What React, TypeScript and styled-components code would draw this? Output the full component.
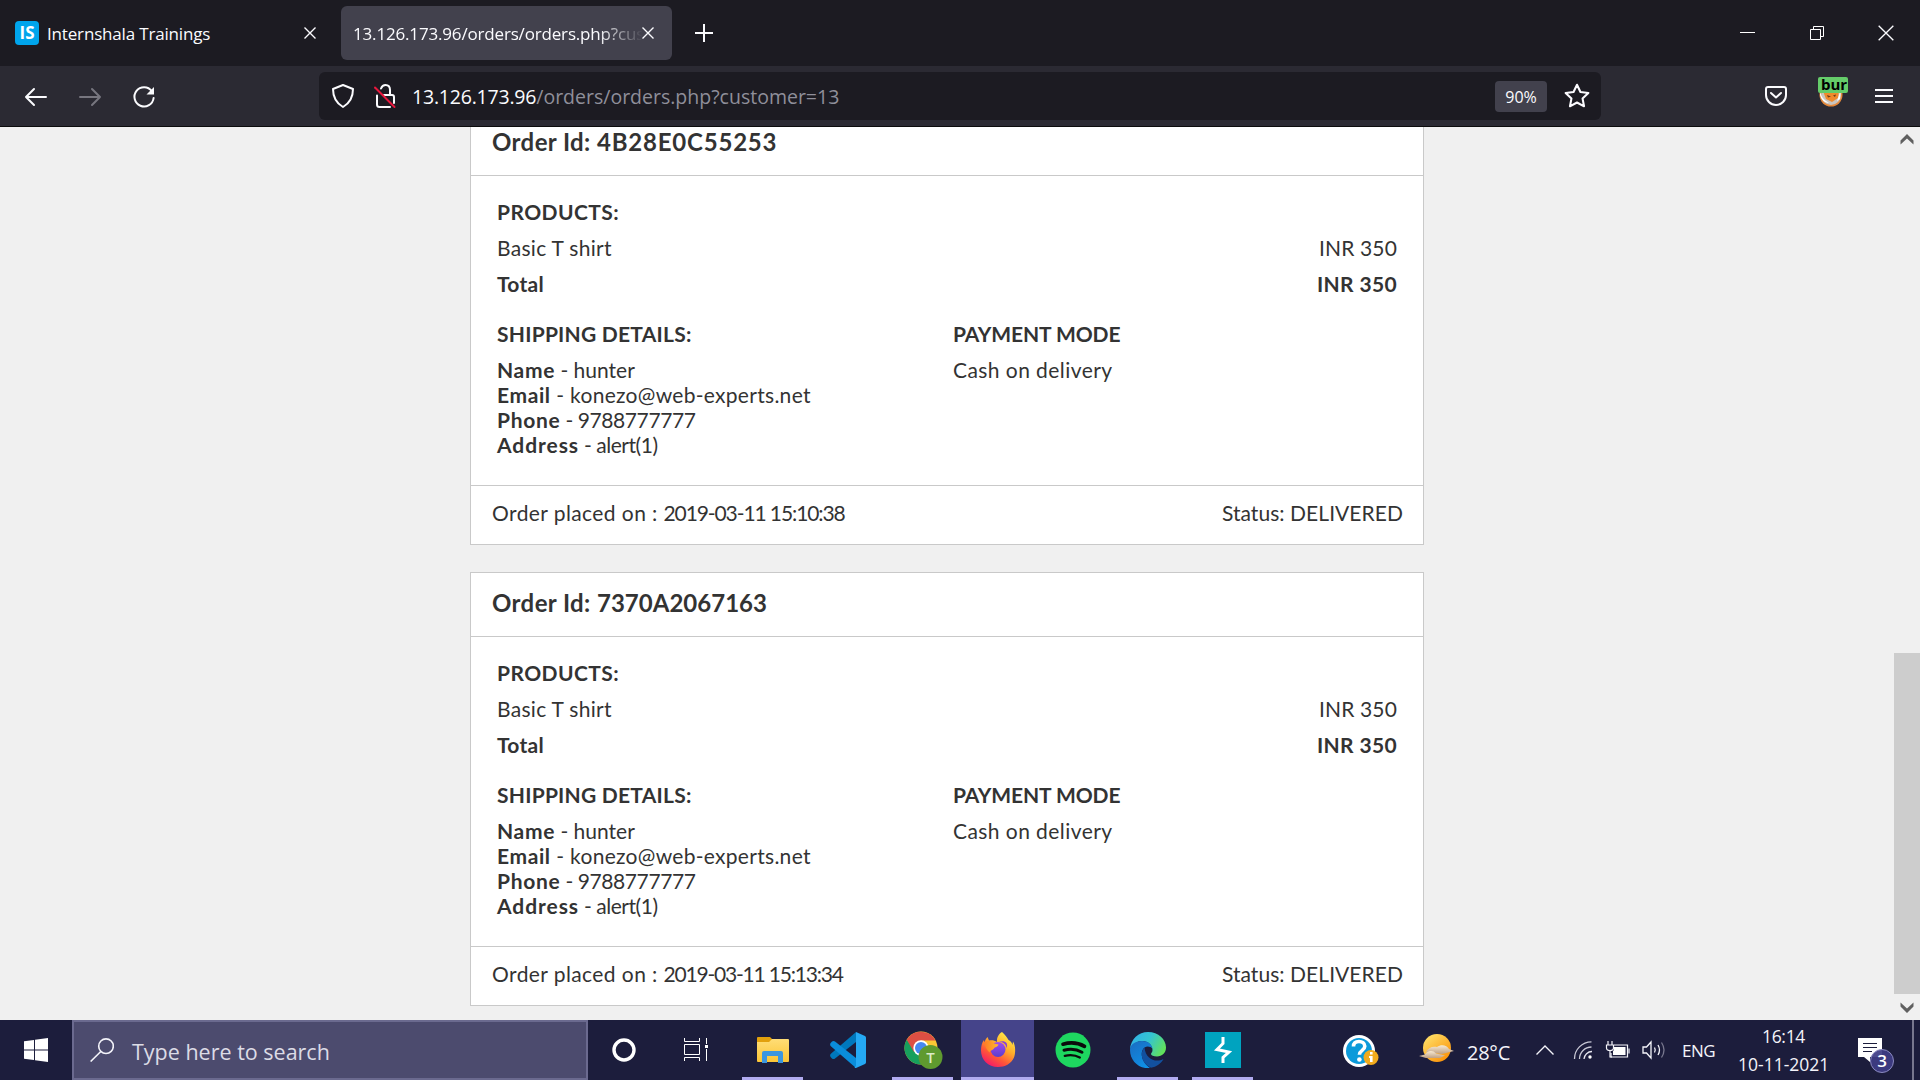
import React from "react";
import styled, { createGlobalStyle, css } from "styled-components";

const Global = createGlobalStyle`
  *, *::before, *::after { box-sizing: border-box; }
  html, body { margin: 0; padding: 0; background: #f0f0f0; }
`;

const chromeFont = css`font-family: "Open Sans", "Noto Sans", sans-serif;`;

const Screen = styled.div`
  width: 1920px;
  height: 1080px;
  display: flex;
  flex-direction: column;
  overflow: hidden;
  svg { display: block; flex: none; }
`;

/* ---------- tab strip ---------- */
const TabStrip = styled.header`
  ${chromeFont}
  height: 66px;
  flex: none;
  display: flex;
  align-items: center;
  background: #1c1b22;
  color: #fbfbfe;
`;
const Tab = styled.div<{ $active?: boolean }>`
  width: ${(p) => (p.$active ? 331 : 341)}px;
  height: 54px;
  display: flex;
  align-items: center;
  padding: ${(p) => (p.$active ? "0 18px 0 12px" : "0 25px 0 15px")};
  border-radius: 6px;
  background: ${(p) => (p.$active ? "#42414d" : "transparent")};
`;
const Favicon = styled.div`
  width: 24px;
  height: 24px;
  margin-right: 8px;
  border-radius: 4px;
  background: #00a5ec;
  color: #fff;
  font-weight: 700;
  font-size: 17px;
  line-height: 24px;
  text-align: center;
`;
const TabTitle = styled.span<{ $fade?: boolean }>`
  flex: 1;
  min-width: 0;
  padding-top: 1px;
  overflow: hidden;
  white-space: nowrap;
  font-size: 17px;
  line-height: 26px;
  letter-spacing: -0.17px;
  ${(p) => p.$fade && "mask-image: linear-gradient(to right, #000 245px, transparent 290px);"}
`;
const NewTab = styled.div`
  width: 64px;
  display: flex;
  justify-content: center;
`;
const WindowControls = styled.div`
  margin-left: auto;
  display: grid;
  grid-template-columns: repeat(3, 69px);
  justify-items: center;
  align-items: center;
`;

/* ---------- toolbar ---------- */
const Toolbar = styled.nav`
  ${chromeFont}
  height: 61px;
  flex: none;
  display: flex;
  align-items: center;
  padding: 0 27px 0 18px;
  background: #2b2a33;
  border-bottom: 1px solid #0c0c0d;
  color: #fbfbfe;
`;
const NavButtons = styled.div`
  display: grid;
  grid-template-columns: repeat(3, 36px);
  gap: 18px;
  justify-items: center;
  padding-top: 2px;
`;
const UrlBar = styled.div`
  width: 1282px;
  height: 48px;
  margin-left: 157px;
  display: flex;
  align-items: center;
  padding: 0 11px 0 12px;
  border-radius: 6px;
  background: #1c1b22;
`;
const Address = styled.div`
  flex: 1;
  margin-left: 15px;
  padding-top: 2px;
  font-size: 19.5px;
  line-height: 28px;
  color: #8f8f9a;
  white-space: nowrap;
`;
const Host = styled.span`
  color: #fbfbfe;
  letter-spacing: -0.2px;
`;
const IdentityIcons = styled.div`
  display: flex;
  gap: 18px;
`;
const Zoom = styled.div`
  width: 52px;
  height: 31px;
  margin-right: 17px;
  border-radius: 4px;
  background: #42414d;
  font-size: 16px;
  line-height: 32px;
  text-align: center;
`;
const Extensions = styled.div`
  margin-left: auto;
  display: flex;
  align-items: center;
`;
const Fox = styled.div`
  position: relative;
  width: 30px;
  height: 32px;
  margin: 0 27px 0 31px;
`;
const FoxBadge = styled.span`
  position: absolute;
  top: -3px;
  left: 0;
  width: 30px;
  height: 16px;
  padding-left: 3px;
  overflow: hidden;
  border-radius: 2px;
  background: #65cc6a;
  color: #000;
  font-weight: 700;
  font-size: 15px;
  line-height: 14px;
`;

/* ---------- page ---------- */
const Viewport = styled.main`
  flex: 1;
  min-height: 0;
  display: flex;
  background: #f0f0f0;
  overflow: hidden;
`;
const Orders = styled.div`
  flex: 1;
  display: flex;
  flex-direction: column;
  gap: 27px;
  margin-top: -16px;
  padding-left: 470px;
  font-family: Lato, "Open Sans", sans-serif;
  font-size: 21px;
  line-height: 25px;
  color: #333;
`;
const Card = styled.article`
  width: 954px;
  height: 434px;
  flex: none;
  display: flex;
  flex-direction: column;
  border: 1px solid #c9c9c9;
  background: #fff;
  white-space: nowrap;
`;
const CardHeader = styled.h3`
  height: 64px;
  margin: 0;
  padding: 15px 21px 0;
  border-bottom: 1px solid #c9c9c9;
  font-size: 24px;
  font-weight: 700;
  line-height: 30px;
`;
const CardBody = styled.div`
  flex: 1;
  padding: 23px 26px 0;
`;
const CardFooter = styled.div`
  height: 59px;
  display: flex;
  justify-content: space-between;
  padding: 14px 20px 0 21px;
  border-top: 1px solid #c9c9c9;
`;
const Heading = styled.h4`
  margin: 0 0 11px;
  font-size: 21px;
  font-weight: 700;
`;
const LineItem = styled.div<{ $total?: boolean }>`
  display: flex;
  justify-content: space-between;
  margin-bottom: ${(p) => (p.$total ? 25 : 11)}px;
  font-weight: ${(p) => (p.$total ? 700 : 400)};
`;
const Details = styled.div`
  display: grid;
  grid-template-columns: 456px 1fr;
`;
const Spaced = styled.span<{ $ls: number }>`
  letter-spacing: ${(p) => p.$ls}px;
  white-space: pre;
`;
const Label = styled(Spaced)`
  font-weight: 700;
`;
const Scrollbar = styled.aside`
  width: 26px;
  display: flex;
  flex-direction: column;
  align-items: center;
  padding: 6px 0;
`;
const Track = styled.div`
  flex: 1;
  width: 26px;
  padding: 508px 0 8px;
  display: flex;
`;
const Thumb = styled.div`
  flex: 1;
  background: #cdcdcd;
`;

/* ---------- taskbar ---------- */
const Taskbar = styled.footer`
  ${chromeFont}
  height: 60px;
  flex: none;
  display: flex;
  align-items: stretch;
  background: #1c1d3c;
  color: #f4f4fa;
`;
const SystemCell = styled.div`
  width: 72px;
  display: flex;
  align-items: center;
  justify-content: center;
`;
const Search = styled.div`
  width: 516px;
  display: flex;
  align-items: center;
  gap: 18px;
  padding-left: 16px;
  border: 2px solid #6b6a8f;
  background: #4c4b6e;
  color: #dcdce6;
  font-size: 21.5px;
  line-height: 30px;
`;
const SearchText = styled.span`
  padding-top: 3px;
`;
const Apps = styled.div`
  display: flex;
  gap: 2px;
  margin-left: 4px;
`;
const AppButton = styled.div<{ $state: "idle" | "open" | "focused" }>`
  width: 73px;
  display: flex;
  flex-direction: column;
  align-items: center;
  background: ${(p) => (p.$state === "focused" ? "#45448a" : "transparent")};
`;
const AppIcon = styled.div`
  height: 57px;
  display: flex;
  align-items: center;
  padding-top: 3px;
`;
const Indicator = styled.div<{ $state: "idle" | "open" | "focused" }>`
  width: ${(p) => (p.$state === "focused" ? 73 : 61)}px;
  height: 3px;
  background: ${(p) => (p.$state === "idle" ? "transparent" : "#b1abf0")};
`;
const Tray = styled.div`
  margin-left: auto;
  display: flex;
  align-items: center;
`;
const Temperature = styled.span`
  width: 44px;
  margin: 4px 25px 0 11px;
  font-size: 20px;
  letter-spacing: -0.26px;
  white-space: nowrap;
`;
const Language = styled.span`
  width: 34px;
  margin: 1px 22px 0 17px;
  font-size: 17px;
  letter-spacing: -0.5px;
`;
const Clock = styled.div`
  width: 91px;
  margin-right: 29px;
  font-size: 17.5px;
  line-height: 28px;
  text-align: center;
  white-space: nowrap;
`;
const Notifications = styled.div`
  position: relative;
  width: 36px;
  height: 36px;
  margin-right: 18px;
  padding-top: 6px;
`;
const Count = styled.span`
  position: absolute;
  top: 17px;
  left: 12px;
  width: 24px;
  height: 24px;
  border: 1px solid #8b8ac0;
  border-radius: 50%;
  background: rgba(62, 60, 132, 0.93);
  color: #fff;
  font-size: 17px;
  font-weight: 600;
  line-height: 22px;
  text-align: center;
`;
const ShowDesktop = styled.div`
  width: 8px;
  height: 60px;
  border-left: 2px solid #77778e;
`;

const CloseX = ({ size = 12, w = 1.4 }: { size?: number; w?: number }) => (
  <svg width={size} height={size} viewBox="0 0 12 12" stroke="#fbfbfe" strokeWidth={w}>
    <path d="M.5.5 11.500 11.500M11.500.5.5 11.500" />
  </svg>
);

type Order = { id: string; idLs: number; placed: string; placedLs: number };
const orders: Order[] = [
  { id: "4B28E0C55253", idLs: 0.8, placed: "2019-03-11 15:10:38", placedLs: -1.1 },
  { id: "7370A2067163", idLs: 0.02, placed: "2019-03-11 15:13:34", placedLs: -1.2 },
];

const OrderCard = ({ id, idLs, placed, placedLs }: Order) => (
  <Card>
    <CardHeader><Spaced $ls={0.4}>Order Id: </Spaced><Spaced $ls={idLs}>{id}</Spaced></CardHeader>
    <CardBody>
      <Heading><Spaced $ls={0.42}>PRODUCTS:</Spaced></Heading>
      <LineItem><Spaced $ls={0.3}>Basic T shirt</Spaced><Spaced $ls={0.14}>INR 350</Spaced></LineItem>
      <LineItem $total><Spaced $ls={0.28}>Total</Spaced><Spaced $ls={0.35}>INR 350</Spaced></LineItem>
      <Details>
        <section>
          <Heading><Spaced $ls={0.24}>SHIPPING DETAILS:</Spaced></Heading>
          <div><Label $ls={0.66}>Name</Label><Spaced $ls={0}> - hunter</Spaced></div>
          <div><Label $ls={0.6}>Email</Label><Spaced $ls={0.29}> - konezo@web-experts.net</Spaced></div>
          <div><Label $ls={0.7}>Phone</Label><Spaced $ls={-0.41}> - 9788777777</Spaced></div>
          <div><Label $ls={0.94}>Address</Label><Spaced $ls={-0.45}> - alert(1)</Spaced></div>
        </section>
        <section>
          <Heading><Spaced $ls={-0.1}>PAYMENT MODE</Spaced></Heading>
          <Spaced $ls={0.43}>Cash on delivery</Spaced>
        </section>
      </Details>
    </CardBody>
    <CardFooter>
      <span><Spaced $ls={0.41}>Order placed on : </Spaced><Spaced $ls={placedLs}>{placed}</Spaced></span>
      <Spaced $ls={0.06}>Status: DELIVERED</Spaced>
    </CardFooter>
  </Card>
);

const ExplorerIcon = () => (
  <svg width="36" height="36" viewBox="0 0 36 36">
    <defs><linearGradient id="fold" x2="0" y2="1"><stop stopColor="#ffdd76" /><stop offset="1" stopColor="#fbc536" /></linearGradient></defs>
    <path d="M2 6q0-1 1-1h12l2 2v4H2z" fill="#e2a00c" />
    <path d="M2 10h12l3-3h16q1 0 1 1v21q0 1-1 1H3q-1 0-1-1z" fill="url(#fold)" />
    <path d="M7 31V21q0-2 2-2h17q2 0 2 2v10h-5v-7H12v7z" fill="#3b96e0" />
  </svg>
);
const VsCodeIcon = () => (
  <svg width="36" height="36" viewBox="0 0 36 36">
    <path d="M26 0 26 10 5 26.500q-1.500 1-3 0L.6 25q-1-1.500 0-3z" fill="#0078bd" />
    <path d="M26 36V26L5 9.500q-1.500-1-3 0L.6 11q-1 1.500 0 3z" fill="#0a8ddb" />
    <path d="M26 0 35 4q1 .5 1 1.800v24.400q0 1.300-1 1.800l-9 4q-1 0-1.500-.6L26 34z" fill="#25a9f4" />
  </svg>
);
const ChromeIcon = () => (
  <svg width="40" height="40" viewBox="0 0 40 40">
    <circle cx="18" cy="18" r="16.500" fill="#fbc735" />
    <path d="M18 18 3.700 9.750A16.500 16.500 0 0 0 18 34.500L25.500 22z" fill="#17a05d" />
    <path d="M18 10.500H32.500A16.500 16.500 0 0 0 3.700 9.750L11 22z" fill="#dd4f43" />
    <circle cx="18" cy="18" r="7.700" fill="#fff" />
    <circle cx="18" cy="18" r="6" fill="#4688f1" />
    <circle cx="27.500" cy="27" r="12" fill="#5f9a2f" />
    <text x="27.500" y="32.500" textAnchor="middle" fontSize="15" fontWeight="600" fill="#dcebc8">T</text>
  </svg>
);
const FirefoxIcon = () => (
  <svg width="36" height="36" viewBox="0 0 36 36">
    <defs>
      <linearGradient id="fxa" x1=".85" y1=".05" x2=".25" y2="1"><stop stopColor="#fff14a" /><stop offset=".4" stopColor="#ffab2a" /><stop offset=".7" stopColor="#ff5638" /><stop offset="1" stopColor="#f5156c" /></linearGradient>
      <linearGradient id="fxb" x2="0" y2="1"><stop stopColor="#a24bf0" /><stop offset="1" stopColor="#5a3ecb" /></linearGradient>
      <linearGradient id="fxc" x2="1" y2="0"><stop stopColor="#ff7b25" /><stop offset="1" stopColor="#ffb92e" /></linearGradient>
    </defs>
    <path d="M22 0C25 3 27 5 28.500 8 31 9 32 11 32.500 13L33 9.500C36 14 35.500 22 34 25.500 31 32 25 35 18 35 8 35 1 27.500 1 18.500 1 14 2 10.500 4 8L4.500 10.500C5 8.500 6 6.500 7.500 5L9 8.500C12 8 15 8.500 17 10 16.500 6 18.500 2 22 0Z" fill="url(#fxa)" />
    <circle cx="18" cy="17.500" r="7.500" fill="url(#fxb)" />
    <path d="M4 10.500C8 7.500 12 9 14 11.500L18.500 12.500C18 15 14.500 15 14 16.500 12 19 10 18 9.500 20.500 7 18 5 15 4 10.500Z" fill="url(#fxc)" />
    <path d="M19 10c4-.5 7 2 7.500 6 .8-1.500.8-3.500 0-5-1.500-2-4.500-2.500-7.500-1z" fill="#8a3fd9" />
  </svg>
);
const SpotifyIcon = () => (
  <svg width="36" height="36" viewBox="0 0 36 36" fill="none" stroke="#0b0b0b" strokeLinecap="round">
    <circle cx="18" cy="18" r="17.500" fill="#1ed760" stroke="none" />
    <path d="M8 12.200c7-2 15.500-1.300 21.500 2.200" strokeWidth="3.600" />
    <path d="M9 18.200c6-1.600 13-.9 18 2" strokeWidth="3" />
    <path d="M9.800 23.800c5.200-1.200 10.800-.7 15 1.700" strokeWidth="2.400" />
  </svg>
);
const EdgeIcon = () => (
  <svg width="36" height="36" viewBox="0 0 36 36">
    <defs>
      <linearGradient id="ea" x1="0" y1=".2" x2="1" y2=".6"><stop stopColor="#2fb0e8" /><stop offset=".5" stopColor="#35c4d0" /><stop offset="1" stopColor="#62e15a" /></linearGradient>
      <linearGradient id="eb" x2=".6" y2="1"><stop stopColor="#1b6cc0" /><stop offset="1" stopColor="#0f8fe6" /></linearGradient>
    </defs>
    <path d="M0 17C.8 7 8.500 0 18 0 28.500 0 36 7.500 36 15.500 36 21 32 24.500 27 24.500 23.500 24.500 21 23.500 21 22 21 21 22.500 20.500 22.500 18 22.500 13 18 9 12.500 9 7 9 2.500 12 0 17Z" fill="url(#ea)" />
    <path d="M0 18C0 12.500 5 9 12 9 18 9 22 12.500 22.500 16.500 21 14.500 17 13.500 14.500 15.500 9 20 12 31 20 36 9 37.500 0 28.500 0 18Z" fill="url(#eb)" />
    <path d="M14.500 15.500C9 21 12 32 21 35.800 26.500 35 31 31.500 33.500 27 26 31 15.500 27.500 14.500 15.500Z" fill="#12509f" />
  </svg>
);
const BurpIcon = () => (
  <svg width="36" height="36" viewBox="0 0 36 36">
    <path d="M0 0h36v36H0z" fill="#00a3bf" />
    <path d="M18 5v6.500L12 17.500 24 20 18 25.500V31" fill="none" stroke="#fff" strokeWidth="3" strokeLinejoin="miter" />
  </svg>
);

const apps: { Icon: () => React.ReactElement; state: "idle" | "open" | "focused" }[] = [
  { Icon: ExplorerIcon, state: "open" },
  { Icon: VsCodeIcon, state: "idle" },
  { Icon: ChromeIcon, state: "open" },
  { Icon: FirefoxIcon, state: "focused" },
  { Icon: SpotifyIcon, state: "idle" },
  { Icon: EdgeIcon, state: "open" },
  { Icon: BurpIcon, state: "open" },
];

export default function App() {
  return (
    <Screen>
      <Global />
      <TabStrip>
        <Tab><Favicon>IS</Favicon><TabTitle>Internshala Trainings</TabTitle><CloseX /></Tab>
        <Tab $active><TabTitle $fade>13.126.173.96/orders/orders.php?customer=13</TabTitle><CloseX /></Tab>
        <NewTab><svg width="18" height="18" viewBox="0 0 18 18" stroke="#fbfbfe" strokeWidth="2"><path d="M0 9h18M9 0v18" /></svg></NewTab>
        <WindowControls>
          <svg width="15" height="16" viewBox="0 0 15 16"><path d="M0 7h15v1H0z" fill="#fff" /></svg>
          <svg width="14" height="14" viewBox="0 0 14 14" fill="none" stroke="#fff"><path d="M.5 3.500h10v10H.5zM3.500 3.500v-3h10v10h-3" /></svg>
          <CloseX size={16} w={1} />
        </WindowControls>
      </TabStrip>

      <Toolbar>
        <NavButtons>
          <svg width="24" height="24" viewBox="0 0 24 24" fill="none" stroke="#fbfbfe" strokeWidth="2" strokeLinecap="round" strokeLinejoin="round"><path d="M22 12H2M10 4 2 12l8 8" /></svg>
          <svg width="24" height="24" viewBox="0 0 24 24" fill="none" stroke="#77767f" strokeWidth="2" strokeLinecap="round" strokeLinejoin="round"><path d="M2 12h20M14 4l8 8-8 8" /></svg>
          <svg width="24" height="24" viewBox="0 0 24 24" fill="none" stroke="#fbfbfe" strokeWidth="2" strokeLinecap="round"><path d="M19.800 6.200A9.600 9.600 0 1 0 21.600 13" /><path d="M22 2v7.500h-7.500z" fill="#fbfbfe" stroke="none" /></svg>
        </NavButtons>
        <UrlBar>
          <IdentityIcons>
            <svg width="24" height="26" viewBox="0 0 24 26" fill="none" stroke="#fbfbfe" strokeWidth="2" strokeLinejoin="round"><path d="M12 2 22 6c0 8-3 14-10 18C5 20 2 14 2 6z" /></svg>
            <svg width="24" height="26" viewBox="0 0 24 26" fill="none" stroke="#fbfbfe" strokeWidth="2" strokeLinecap="round" strokeLinejoin="round"><path d="M8 5.500C9 3 10.500 2 12.500 2 15.500 2 17 4 17 7v4M4 12.500v9q0 2.500 2.500 2.500H17M11 12h8q2 0 2 2v6" /><path d="M2 4.500 21.500 24" stroke="#e8173d" /></svg>
          </IdentityIcons>
          <Address><Host>13.126.173.96</Host>/orders/orders.php?customer=13</Address>
          <Zoom>90%</Zoom>
          <svg width="26" height="26" viewBox="0 0 24 24" fill="none" stroke="#fbfbfe" strokeWidth="1.900" strokeLinejoin="round"><path d="m12 1.600 3.200 6.700 7.300.9-5.400 5 1.400 7.300L12 18l-6.500 3.500 1.400-7.300-5.400-5 7.300-.9z" /></svg>
        </UrlBar>
        <Extensions>
          <svg width="22" height="20" viewBox="0 0 22 20" fill="none" stroke="#fbfbfe" strokeWidth="2" strokeLinecap="round" strokeLinejoin="round"><path d="M3 1h16q2 0 2 2v6a10 10 0 0 1-20 0V3q0-2 2-2zM6 7l5 4.500L16 7" /></svg>
          <Fox>
            <svg width="26" height="32" viewBox="0 0 26 32"><circle cx="13" cy="15" r="11.500" fill="#e5883a" /><circle cx="13" cy="15" r="10" fill="#c9c5c0" /><path d="M5 11h16l-1 7-6 4-6-3z" fill="#f08a2c" /><path d="M2 11c1 6 4 9 9 12-5 0-8-4-9-8zM23 9l-4 12 3-2z" fill="#fff" /><path d="M9 15l4 1.500-3 1zM15 15.500l3-1-1 2.500z" fill="#6b3b18" /></svg>
            <FoxBadge>burp</FoxBadge>
          </Fox>
          <svg width="18" height="14" viewBox="0 0 18 14"><path d="M0 0h18v2H0zM0 6h18v2H0zM0 12h18v2H0z" fill="#fbfbfe" /></svg>
        </Extensions>
      </Toolbar>

      <Viewport>
        <Orders>{orders.map((o) => <OrderCard key={o.id} {...o} />)}</Orders>
        <Scrollbar>
          <svg width="14" height="12" viewBox="0 0 14 12"><path d="M7 1 13.500 7.500V11.500L7 5.500.5 11.500V7.500z" fill="#606060" /></svg>
          <Track><Thumb /></Track>
          <svg width="14" height="12" viewBox="0 0 14 12"><path d="M7 11 13.500 4.500V.5L7 6.500.5.5V4.500z" fill="#606060" /></svg>
        </Scrollbar>
      </Viewport>

      <Taskbar>
        <SystemCell><svg width="24" height="24" viewBox="0 0 24 24" fill="#fff"><path d="M0 3.300 10 2v9.500H0zM11 1.800 24 0v11.500H11zM0 12.500h10V22L0 20.700zM11 12.500h13V24l-13-1.800z" /></svg></SystemCell>
        <Search>
          <svg width="24" height="24" viewBox="0 0 24 24" fill="none" stroke="#f4f4fa" strokeWidth="1.600"><circle cx="16" cy="8.200" r="7.300" /><path d="M10.800 13.500.6 23.500" /></svg>
          <SearchText>Type here to search</SearchText>
        </Search>
        <SystemCell><svg width="24" height="24" viewBox="0 0 24 24"><circle cx="12" cy="12" r="10" fill="none" stroke="#fff" strokeWidth="3.400" /></svg></SystemCell>
        <SystemCell><svg width="24" height="24" viewBox="0 0 24 24" fill="none" stroke="#fff"><path d="M.5 0v3.500h15V0M.5 6.500h15v10H.5zM.5 23v-3.500h15V23M22.500 0v6M22.500 11v12" /><path d="M21 7h3v3h-3z" fill="#fff" stroke="none" /></svg></SystemCell>
        <Apps>
          {apps.map(({ Icon, state }, i) => (
            <AppButton key={i} $state={state}>
              <AppIcon><Icon /></AppIcon>
              <Indicator $state={state} />
            </AppButton>
          ))}
        </Apps>
        <Tray>
          <svg width="37" height="36" viewBox="0 0 37 36"><circle cx="17" cy="19" r="16" fill="#fff" /><circle cx="17" cy="19" r="13" fill="#0b9ada" /><path d="M11.500 14.500c0-3.500 2.500-5 5.500-5s5.800 1.700 5.800 4.800c0 4.200-5.400 4-5.400 8.500" fill="none" stroke="#fff" strokeWidth="3.600" /><circle cx="17.400" cy="27.500" r="2.300" fill="#fff" /><circle cx="29" cy="25.500" r="7.500" fill="#f2ab1d" /><path d="M28 20h2.600v2.400H28zM27 24h3.600v6H28v-4h-1z" fill="#fff" /></svg>
          <svg width="77" height="36" viewBox="0 0 77 36"><defs><linearGradient id="sun" x2=".8" y2="1"><stop stopColor="#ffe873" /><stop offset="1" stopColor="#fb9005" /></linearGradient><linearGradient id="cl" x2="0" y2="1"><stop stopColor="#f8ead2" /><stop offset="1" stopColor="#bfa184" /></linearGradient></defs><g transform="translate(1 0)"><circle cx="57" cy="16" r="14" fill="url(#sun)" /><path d="M46 20c2-4 6-6 11-5 4-3 10-2 12 2l5 2-12 3z" fill="url(#cl)" /><path d="M39 24l6-1.500c2-4 8-5 11-1l9 2-5 2.500H46z" fill="url(#cl)" /></g></svg>
          <Temperature>28°C</Temperature>
          <svg width="18" height="10" viewBox="0 0 18 10" fill="none" stroke="#f4f4fa" strokeWidth="1.400"><path d="M.5 9.500 9 1l8.500 8.500" /></svg>
          <svg width="38" height="18" viewBox="0 0 38 18" fill="none" strokeWidth="1.300"><path d="M20.500 18A17 17 0 0 1 37.500.8M25.500 18A12 12 0 0 1 37.500 6" stroke="#c9c9d6" /><path d="M30 18a8 8 0 0 1 8-7.500" stroke="#e6e6ef" /><circle cx="36" cy="16" r="1.700" fill="#fff" /></svg>
          <svg width="38" height="18" viewBox="0 0 38 18" fill="none" stroke="#f4f4fa" strokeWidth="1.200"><path d="M16 0v4M20 0v4M14.500 4h7v3q0 2.500-3.500 2.500T14.500 7zM18 9.500V16h2" /><path d="M22 4h13.500v12H19v-4" /><path d="M22 6h11.500v8H21v-4l1-1z" fill="#fff" stroke="none" /><path d="M37 7.500v5" /></svg>
          <svg width="35" height="20" viewBox="0 0 35 20" fill="none" stroke="#f4f4fa" strokeWidth="1.300"><path d="M13 7h3.500L21 2v16l-4.500-5H13z" /><path d="M24.500 7.500q1.500 2.500 0 5M28 5q3 5 0 10" /><path d="M31.500 2.500q5 7.500 0 15" stroke="#77778e" /></svg>
          <Language>ENG</Language>
          <Clock><Spaced $ls={-0.3}>16:14</Spaced><br />10-11-2021</Clock>
          <Notifications>
            <svg width="24" height="24" viewBox="0 0 24 24"><path d="M0 0h24v19H12v5l-6-5H0z" fill="#fff" /><path d="M5 5h14v1H5zM5 9h14v1H5zM5 13h9v1H5z" fill="#1c1d3c" /></svg>
            <Count>3</Count>
          </Notifications>
          <ShowDesktop />
        </Tray>
      </Taskbar>
    </Screen>
  );
}
